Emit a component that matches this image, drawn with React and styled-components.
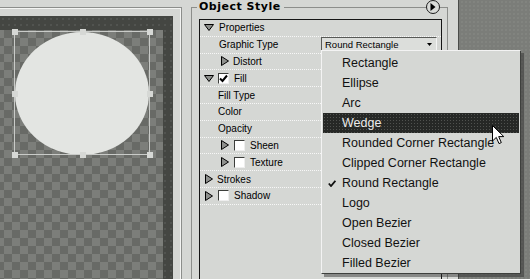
import React from "react";
import styled, { createGlobalStyle } from "styled-components";

const GlobalStyle = createGlobalStyle`
    *, *::before, *::after {
        box-sizing: border-box;
    }
    body {
        margin: 0;
        background: #7b7d79;
    }
`;

const Root = styled.div`
    position: relative;
    display: flex;
    width: 530px;
    height: 279px;
    overflow: hidden;
    background-color: #7b7d79;
    background-image: radial-gradient(#858783 0.6px, transparent 0.9px);
    background-size: 4px 4px;
    font-family: "Liberation Sans", Arial, sans-serif;
    color: #000;
`;

/* ---- left: document window ---- */

const LeftPane = styled.div`
    flex: none;
    width: 191px;
    padding-top: 7px;
    background: #d5d7d4;
    display: flex;
    flex-direction: column;
`;

const Frame = styled.div`
    flex: 1;
    width: 182px;
    padding: 8px 8px 0 0;
    border-top: 1px solid #8c8e8b;
    border-right: 1px solid #8c8e8b;
    box-shadow: inset -1px 1px 0 #f3f4f2;
    display: flex;
    flex-direction: column;
`;

const Mat = styled.div`
    flex: 1;
    padding: 14px 10px 0 0;
    background-color: #444642;
    background-image: radial-gradient(#595b57 0.6px, transparent 0.9px);
    background-size: 6px 6px;
    display: flex;
    flex-direction: column;
`;

const Canvas = styled.div`
    position: relative;
    flex: 1;
    background-color: #7c7e7a;
    background-image: conic-gradient(#686a66 25%, transparent 0 50%, #686a66 0 75%, transparent 0);
    background-size: 16px 16px;
    background-position: -4px 0;
`;

const Shape = styled.div`
    position: absolute;
    left: 15px;
    top: 2px;
    width: 134px;
    height: 123px;
    border-radius: 50%;
    background: #e3e5e2;
`;

const Bounds = styled.div`
    position: absolute;
    left: 14px;
    top: 1px;
    width: 136px;
    height: 124px;
    border: 1px solid #c9cbc8;
`;

const Handle = styled.div`
    position: absolute;
    width: 6px;
    height: 6px;
    margin: -3px 0 0 -3px;
    background: #d6d8d5;
`;

/* ---- right: Object Style panel ---- */

const RightPane = styled.div`
    flex: none;
    width: 268px;
    padding-right: 10px;
    background: #d5d7d4;
    border-right: 1px solid #4a4c49;
    display: flex;
    flex-direction: column;
`;

const GroupHead = styled.div`
    flex: none;
    height: 14px;
    display: flex;
    align-items: flex-start;
`;

const HeadEdge = styled.div`
    flex: none;
    width: ${(p) => p.w}px;
    height: 7px;
    margin-top: 7px;
    border-top: 1px solid #8c8e8b;
    ${(p) => (p.side === "left" ? "border-left" : "border-right")}: 1px solid #8c8e8b;
`;

const HeadLine = styled.div`
    flex: 1;
    margin-top: 7px;
    border-top: 1px solid #8c8e8b;
`;

const GroupTitle = styled.div`
    padding: 0 3px 0 2px;
    font-family: "DejaVu Sans", Verdana, sans-serif;
    font-weight: bold;
    font-size: 11px;
    letter-spacing: 0.5px;
    line-height: 13px;
`;

const RoundButton = styled.div`
    flex: none;
    width: 14px;
    height: 14px;
    border: 1px solid #1c1c1c;
    border-radius: 50%;
    background: #d9dbd8;
    display: flex;
    align-items: center;
    justify-content: center;
`;

const GroupBody = styled.div`
    flex: 1;
    padding: 5px 5px 0 7px;
    border-left: 1px solid #8c8e8b;
    border-right: 1px solid #8c8e8b;
    display: flex;
    flex-direction: column;
`;

const TreePanel = styled.div`
    flex: 1;
    border: 1px solid #151515;
    border-bottom: none;
    background: #d5d7d4;
`;

const Row = styled.div`
    display: flex;
    align-items: center;
    height: 16.8px;
    padding-left: ${(p) => p.indent}px;
    border-bottom: 1px dotted #f7f7f7;
    font-size: 10px;
`;

const Toggle = styled.svg`
    flex: none;
    margin-right: ${(p) => p.gap}px;
`;

const CheckBox = styled.div`
    flex: none;
    width: 11px;
    height: 11px;
    margin-right: 5px;
    border: 1px solid;
    border-color: #3c3e3b #eeeeee #eeeeee #3c3e3b;
    background: #fff;
    display: flex;
    align-items: center;
    justify-content: center;
`;

const Label = styled.span`
    white-space: nowrap;
`;

const Select = styled.div`
    margin-left: auto;
    margin-right: 4px;
    width: 116px;
    height: 15px;
    padding: 0 4px 0 3px;
    border: 1px solid;
    border-color: #585a57 #f4f4f4 #f4f4f4 #585a57;
    background: #dcdedb;
    display: flex;
    align-items: center;
    justify-content: space-between;
    font-size: 9.5px;
`;

const Backdrop = styled.div`
    flex: 1;
`;

/* ---- popup menu ---- */

const Menu = styled.div`
    position: absolute;
    left: 321px;
    top: 50px;
    width: 200px;
    padding-top: 2px;
    border: 1px solid;
    border-color: #f3f3f3 #3e403d #3e403d #f3f3f3;
    background: #d5d7d4;
    box-shadow: 3px 3px 0 rgba(40, 40, 40, 0.45);
`;

const MenuItem = styled.div`
    display: flex;
    align-items: center;
    height: 20px;
    margin: 0 1px;
    padding-left: 5px;
    font-size: 12.5px;
    white-space: nowrap;
    color: ${(p) => (p.active ? "#ececec" : "#111")};
    background-color: ${(p) => (p.active ? "#262826" : "transparent")};
    background-image: ${(p) =>
        p.active ? "radial-gradient(#50524f 0.6px, transparent 0.9px)" : "none"};
    background-size: 3px 3px;
`;

const CheckSlot = styled.span`
    flex: none;
    width: 14px;
    display: flex;
    align-items: center;
`;

const Cursor = styled.svg`
    position: absolute;
    left: 492px;
    top: 125px;
`;

const DownTri = ({ gap }) => (
    <Toggle gap={gap} width="10" height="7" viewBox="0 0 10 7">
        <polygon points="0.5,0.5 9.5,0.5 5,6.5" fill="#8e908d" stroke="#000" />
    </Toggle>
);

const RightTri = ({ gap }) => (
    <Toggle gap={gap} width="8" height="10" viewBox="0 0 8 10">
        <polygon points="0.5,0.5 7.5,5 0.5,9.5" fill="#8e908d" stroke="#000" />
    </Toggle>
);

const Check = ({ on }) => (
    <CheckBox>
        {on && (
            <svg width="9" height="9" viewBox="0 0 9 9">
                <path d="M1 4.5 L3.5 7 L8 1.5" fill="none" stroke="#000" strokeWidth="2" />
            </svg>
        )}
    </CheckBox>
);

const handles = [
    [14, 1], [82, 1], [149, 1],
    [14, 63], [149, 63],
    [14, 124], [82, 124], [149, 124],
];

const shapes = [
    "Rectangle",
    "Ellipse",
    "Arc",
    "Wedge",
    "Rounded Corner Rectangle",
    "Clipped Corner Rectangle",
    "Round Rectangle",
    "Logo",
    "Open Bezier",
    "Closed Bezier",
    "Filled Bezier",
];

const App = () => {
    return (
        <Root>
            <GlobalStyle />
            <LeftPane>
                <Frame>
                    <Mat>
                        <Canvas>
                            <Shape />
                            <Bounds />
                            {handles.map(([x, y], i) => (
                                <Handle key={i} style={{ left: x + 0.5, top: y + 0.5 }} />
                            ))}
                        </Canvas>
                    </Mat>
                </Frame>
            </LeftPane>

            <RightPane>
                <GroupHead>
                    <HeadEdge side="left" w={6} />
                    <GroupTitle>Object Style</GroupTitle>
                    <HeadLine />
                    <RoundButton>
                        <svg width="6" height="8" viewBox="0 0 6 8">
                            <polygon points="0.5,0 5.5,4 0.5,8" fill="#000" />
                        </svg>
                    </RoundButton>
                    <HeadEdge side="right" w={8} />
                </GroupHead>
                <GroupBody>
                    <TreePanel>
                        <Row indent={4}>
                            <DownTri gap={5} />
                            <Label>Properties</Label>
                        </Row>
                        <Row indent={19}>
                            <Label>Graphic Type</Label>
                            <Select>
                                <span>Round Rectangle</span>
                                <svg width="5" height="3" viewBox="0 0 5 3">
                                    <polygon points="0,0 5,0 2.5,3" fill="#000" />
                                </svg>
                            </Select>
                        </Row>
                        <Row indent={21}>
                            <RightTri gap={4} />
                            <Label>Distort</Label>
                        </Row>
                        <Row indent={4}>
                            <DownTri gap={4} />
                            <Check on />
                            <Label>Fill</Label>
                        </Row>
                        <Row indent={18}>
                            <Label>Fill Type</Label>
                        </Row>
                        <Row indent={18}>
                            <Label>Color</Label>
                        </Row>
                        <Row indent={18}>
                            <Label>Opacity</Label>
                        </Row>
                        <Row indent={21}>
                            <RightTri gap={5} />
                            <Check />
                            <Label>Sheen</Label>
                        </Row>
                        <Row indent={21}>
                            <RightTri gap={5} />
                            <Check />
                            <Label>Texture</Label>
                        </Row>
                        <Row indent={5}>
                            <RightTri gap={4} />
                            <Label>Strokes</Label>
                        </Row>
                        <Row indent={5}>
                            <RightTri gap={5} />
                            <Check />
                            <Label>Shadow</Label>
                        </Row>
                    </TreePanel>
                </GroupBody>
            </RightPane>

            <Backdrop />

            <Menu>
                {shapes.map((name) => (
                    <MenuItem key={name} active={name === "Wedge"}>
                        <CheckSlot>
                            {name === "Round Rectangle" && (
                                <svg width="8" height="7" viewBox="0 0 8 7">
                                    <path d="M0.8 3.5 L3 6 L7.4 0.8" fill="none" stroke="#111" strokeWidth="1.8" />
                                </svg>
                            )}
                        </CheckSlot>
                        {name}
                    </MenuItem>
                ))}
            </Menu>

            <Cursor width="13" height="20" viewBox="0 0 13 20">
                <path
                    d="M0.5 0.5 L0.5 16 L4.3 12.4 L7 18.6 L9.3 17.6 L6.7 11.6 L11.8 11.6 Z"
                    fill="#fff"
                    stroke="#000"
                    strokeWidth="1"
                />
            </Cursor>
        </Root>
    );
};

export default App;
